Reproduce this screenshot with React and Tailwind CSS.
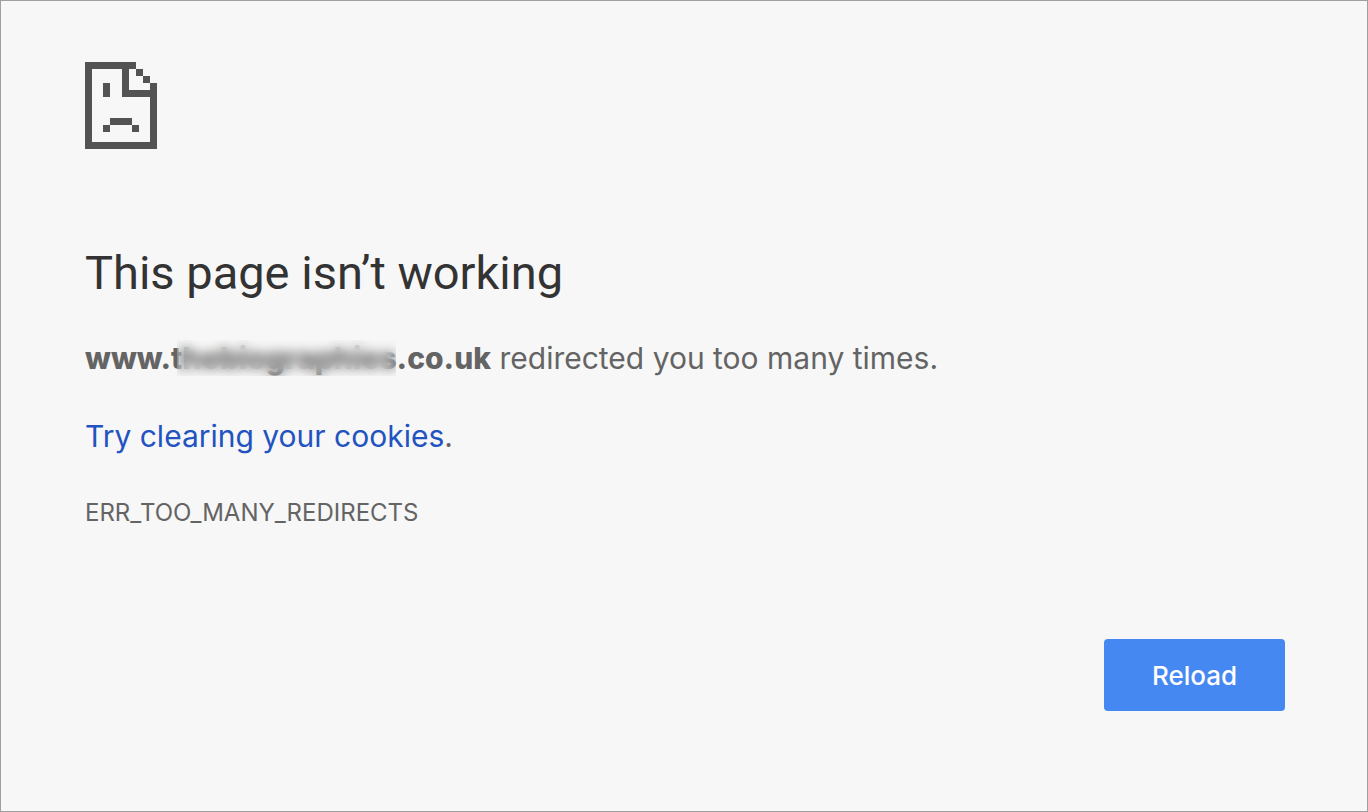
import React from 'react';

const SadPageIcon = () => (
  <svg
    className="w-[72px] h-[87px] fill-[#535353]"
    viewBox="0 0 72 87"
    shapeRendering="crispEdges"
    aria-hidden="true"
  >
    {/* Page outline */}
    <path d="M0 0H51V7H44V28H65V21H72V87H0ZM7 7V80H65V35H37V7Z" fillRule="evenodd" />
    {/* Folded corner */}
    <path d="M51 7H58V14H51ZM58 14H65V21H58Z" />
    {/* Face */}
    <path d="M18 21H25V35H18ZM25 56H47V63H25ZM18 63H25V70H18ZM47 63H54V70H47Z" />
  </svg>
);

const App = () => {
  const handleReload = () => {
    window.location.reload();
  };

  return (
    <div className="min-h-screen bg-[#f7f7f7] border border-[#a0a0a0] pl-[84px] pr-[82px] pt-[61px] pb-[96px] font-[Inter,'Liberation_Sans',sans-serif] text-[#646464]">
      <main>
        <SadPageIcon />
        <h1 className="mt-[95px] font-[Roboto,'Liberation_Sans',sans-serif] text-[47px] leading-[58px] text-[#333333]">
          This page isn’t working
        </h1>
        <p className="mt-[38px] text-[30px] leading-[36px]">
          <strong className="font-extrabold">
            www.
            <span className="relative">
              thebiographies
              <span className="absolute inset-y-0 left-1.5 right-px backdrop-blur-[6px]" />
            </span>
            .co.uk
          </strong>{' '}
          redirected you too many times.
        </p>
        <p className="mt-[42px] text-[30px] leading-[36px]">
          <a href="#cookies" className="text-[#2253c0]">Try clearing your cookies</a>.
        </p>
        <p className="mt-[43px] text-[24px] leading-[32px]">ERR_TOO_MANY_REDIRECTS</p>
      </main>
      <div className="mt-[110px] flex justify-end">
        <button
          type="button"
          onClick={handleReload}
          className="h-[72px] px-12 rounded-[4px] bg-[#4688f1] text-[26px] font-medium text-white cursor-pointer"
        >
          Reload
        </button>
      </div>
    </div>
  );
};

export default App;
